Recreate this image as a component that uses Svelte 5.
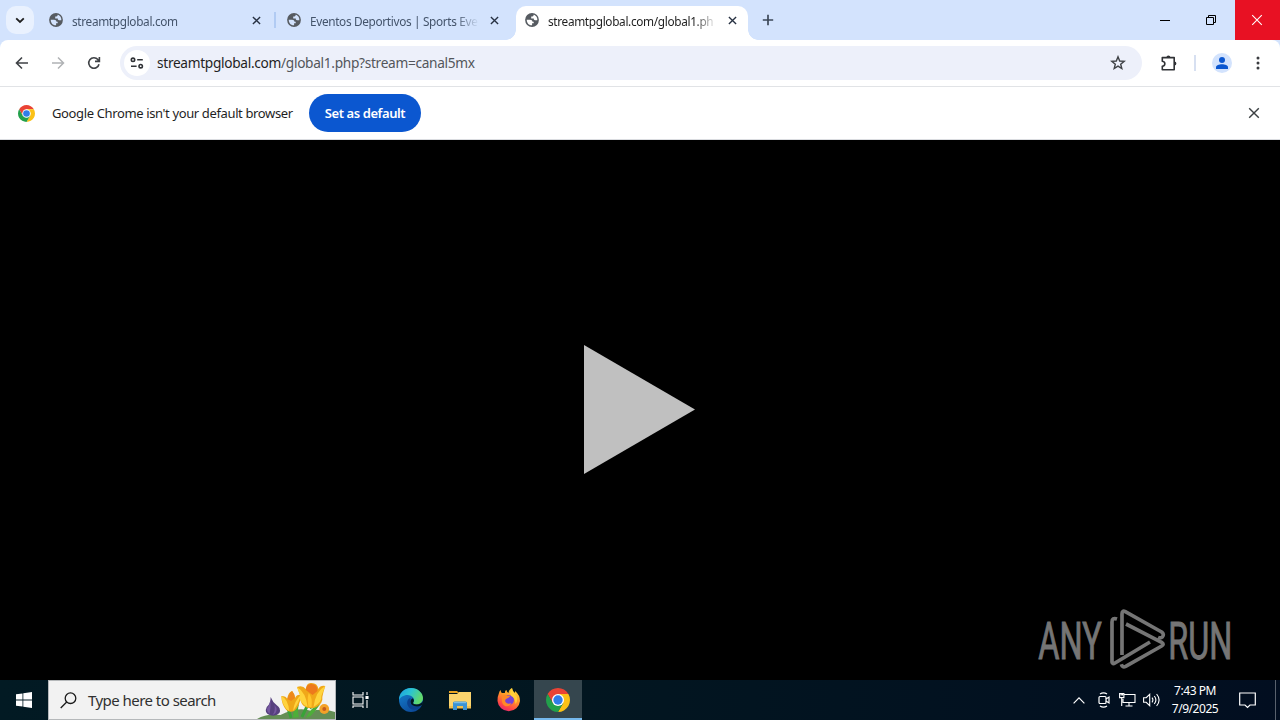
<script lang="ts">
    interface Tab {
        title: string;
        active: boolean;
    }

    let tabs: Tab[] = [
        { title: 'streamtpglobal.com', active: false },
        { title: 'Eventos Deportivos | Sports Eve', active: false },
        { title: 'streamtpglobal.com/global1.ph', active: true }
    ];

    let host = 'streamtpglobal.com';
    let path = '/global1.php?stream=canal5mx';
    let time = '7:43 PM';
    let date = '7/9/2025';
</script>

{#snippet chromeLogo(size: number)}
    <svg width={size} height={size} viewBox="2 2 44 44">
        <path fill="#ea4335" d="M4.95 13A22 22 0 0 1 43.05 13H24L14.47 29.5z" />
        <path fill="#fbc116" d="M43.05 13A22 22 0 0 1 24 46L33.53 29.5L24 13z" />
        <path fill="#22a04b" d="M24 46A22 22 0 0 1 4.95 13L14.47 29.5H33.53z" />
        <circle cx="24" cy="24" r="11" fill="#fff" />
        <circle cx="24" cy="24" r="8.6" fill="#2f7de9" />
    </svg>
{/snippet}

{#snippet cross(size: number, width: number)}
    <svg width={size} height={size} viewBox="0 0 10 10" fill="none" stroke="currentColor" stroke-width={width}>
        <path d="M1 1l8 8M9 1l-8 8" />
    </svg>
{/snippet}

<div class="screen">
    <div class="tab-strip">
        <button class="tab-search" aria-label="Search tabs">
            <svg width="10" height="7" viewBox="0 0 10 7" fill="none" stroke="#1f1f1f" stroke-width="1.8"><path d="M1.2 1.3L5 5l3.8-3.7" /></svg>
        </button>
        <div class="tabs">
            {#each tabs as tab}
                <div class="tab" class:active={tab.active}>
                    <svg class="favicon" width="14" height="14" viewBox="0 0 14 14">
                        <circle cx="7" cy="7" r="6.9" fill="#565b61" />
                        <path fill={tab.active ? '#fff' : '#d3e3fd'} d="M8.6 1.8C9.9 2 11.4 3 12 4.7c.3.8.4 1.8.3 2.6H10c-.8 0-1.2-.5-1.2-1.2V5.4H6.2V3.5h1.2c.8 0 1.2-.7 1.2-1.7z" />
                        <path fill={tab.active ? '#fff' : '#d3e3fd'} d="M1.7 6.7H5c1.5 0 2.5.9 2.5 2.1h1.2v1.4H7.1v2.1c-1.8.1-3.4-.7-4.4-2.1-.7-1-1-2.2-1-3.500z" />
                    </svg>
                    <span class="tab-title">{tab.title}</span>
                    <span class="tab-close">{@render cross(9, 1.5)}</span>
                </div>
            {/each}
        </div>
        <button class="new-tab" aria-label="New tab">
            <svg width="12" height="12" viewBox="0 0 12 12" stroke="#3c4858" stroke-width="1.7"><path d="M6 .8v10.4M.8 6h10.4" /></svg>
        </button>
        <div class="window-buttons">
            <span class="win">
                <svg width="10" height="10" viewBox="0 0 10 10" stroke="#000"><path d="M0 5.5h10" /></svg>
            </span>
            <span class="win">
                <svg width="10" height="10" viewBox="0 0 10 10" fill="none" stroke="#000"><path d="M.5 2.5h7v7h-7zM2.5 2.5v-2h7v7h-2" /></svg>
            </span>
            <span class="win close">{@render cross(12, 0.9)}</span>
        </div>
    </div>

    <div class="toolbar">
        <div class="nav">
            <svg width="14" height="14" viewBox="0 0 14 14" fill="none" stroke="#3f4246" stroke-width="1.6"><path d="M13 7H2M7 1.5L1.5 7 7 12.5" /></svg>
            <svg width="14" height="14" viewBox="0 0 14 14" fill="none" stroke="#b0b2b5" stroke-width="1.5"><path d="M1 7h11M7 1.5L12.5 7 7 12.5" /></svg>
            <svg width="14" height="14" viewBox="0 0 14 14" fill="none" stroke="#3f4246" stroke-width="1.6"><path d="M12 8.2A5.2 5.2 0 1 1 10.9 3.6L12.2 5M12.4 1v4.4H8" /></svg>
        </div>
        <div class="omnibox">
            <span class="site-info">
                <svg width="14" height="12" viewBox="0 0 14 12" fill="none" stroke="#303236" stroke-width="1.6"><circle cx="3" cy="2.8" r="1.7" /><path d="M7.2 2.8h5.6M1 9.2h5.6" /><circle cx="10.7" cy="9.2" r="1.7" /></svg>
            </span>
            <span class="url">{host}<span class="url-path">{path}</span></span>
            <svg class="star" width="16" height="16" viewBox="0 0 16 16" fill="none" stroke="#3f4246" stroke-width="1.4"><path d="M8 1.8l1.7 4.2 4.5.3-3.5 2.9 1.1 4.4L8 11.2l-3.8 2.4 1.1-4.4L1.8 6.3l4.5-.3z" /></svg>
        </div>
        <svg class="puzzle" width="18" height="18" viewBox="0 0 18 18"><path fill="none" stroke="#303236" stroke-width="1.6" stroke-linejoin="round" d="M2.3 3.6h11.9v12.2H2.3v-3.6c3.4-.6 3.4-4.5 0-5z" /><path fill="#303236" d="M6.4 3.4a2 2 0 0 1 4 0zM14.4 7.6a2 2 0 0 1 0 4z" /></svg>
        <span class="divider"></span>
        <span class="avatar">
            <svg width="12" height="12" viewBox="0 0 12 12" fill="#0b57d0"><circle cx="6" cy="3" r="3" /><path d="M0 12v-1.8C0 8.3 3 7.2 6 7.2s6 1.1 6 3V12z" /></svg>
        </span>
        <svg class="menu" width="4" height="14" viewBox="0 0 4 14" fill="#3a3c40"><circle cx="2" cy="2" r="1.5" /><circle cx="2" cy="7" r="1.5" /><circle cx="2" cy="12" r="1.5" /></svg>
    </div>

    <div class="infobar">
        {@render chromeLogo(17)}
        <span class="message">Google Chrome isn't your default browser</span>
        <button class="set-default">Set as default</button>
        <span class="dismiss">{@render cross(12, 1.2)}</span>
    </div>

    <div class="player">
        <svg class="play" width="111" height="129" viewBox="0 0 111 129"><path fill="#c0c0c0" d="M0 0l111 64.5L0 129z" /></svg>
        <svg class="watermark" width="200" height="72" viewBox="0 0 600 216">
            <g class="brand">
                <text x="4" y="160" textLength="190" lengthAdjust="spacingAndGlyphs">ANY</text>
                <text x="394" y="160" textLength="192" lengthAdjust="spacingAndGlyphs">RUN</text>
            </g>
            <g fill="none" stroke="#757575" stroke-width="11" stroke-linejoin="round">
                <path d="M255 147V24q0-12 10-7L374 78q9 7 2 15-5 5-13 1" />
                <path d="M267 54L374 109q9 6 0 11L266 181q-10 5-13-6" />
                <path d="M240 39q-15-5-15 9V168q1 8 9 3L339 108" />
            </g>
        </svg>
    </div>

    <div class="taskbar">
        <span class="start">
            <svg width="16" height="16" viewBox="0 0 16 16" fill="#fff"><path d="M0 2.3L6.5 1.4v6.2H0zM7.3 1.3L16 0v7.6H7.3zM0 8.4h6.5v6.2L0 13.7zM7.3 8.4H16V16l-8.7-1.3z" /></svg>
        </span>
        <div class="search">
            <svg width="17" height="17" viewBox="0 0 17 17" fill="none" stroke="#1b1b1b" stroke-width="1.3"><circle cx="10.5" cy="6.2" r="5.3" /><path d="M6.7 10L.7 16" /></svg>
            <span>Type here to search</span>
            <svg class="flowers" width="78" height="38" viewBox="0 0 80 38" preserveAspectRatio="none">
                <path fill="#648e55" d="M0 38Q10 32 24 34 42 25 56 30 68 27 80 31V38z" />
                <path d="M31 25l4 12M53 22l-7 14M54 27l8-6" stroke="#38a338" stroke-width="3" fill="none" />
                <path d="M37 37q-1-8 6-14-2 8 0 13M50 37q5-11 15-14-5 7-10 12" fill="#4eae39" />
                <path fill="#57417f" d="M14 16q2 5 6 8 5 3 3 8-4 4-10 2-6-2-3-8 4-3 4-10z" />
                <path fill="#7658a0" d="M14 19q0 8-1 14-5-4-1-8zM18 24q1 6-2 10 5-2 4-7z" />
                <path fill="#eea718" d="M25 15q5 0 6 3 1-7 5-8 3 3 3 7 2-4 6-3-1 12-7 16-4 2-8-1-5-6-5-14z" />
                <path fill="#ffd33d" d="M25 15q7 3 8 15-7-4-8-15zM45 14q-2 8-8 16 1-10 8-16z" />
                <path fill="#ee871b" d="M31 18q2-6 5-8 3 4 3 7l-4 3z" />
                <path fill="#f0a819" d="M41 6q6-2 9 2 1-7 6-6 6 0 7 6 2-4 7-3-2 6-3 11 1 6-6 10-7 3-13-1-5-5-3-9z" />
                <path fill="#ffd43c" d="M41 6q9 5 11 20-9-4-8-12zM70 5q-10 5-12 21 9-5 8-11z" />
                <path fill="#ed7a1c" d="M50 9q1-7 6-6 6 0 6 7l-5 4z" />
                <path fill="#ffc52b" d="M53 12q4 4 3 14h-3q-2-7 0-14z" />
                <circle cx="69" cy="28" r="5" fill="#f4a128" />
                <circle cx="69" cy="28" r="2" fill="#c45d20" />
            </svg>
        </div>
        <span class="task-view">
            <svg width="17" height="16" viewBox="0 0 17 16" fill="none" stroke="#fff" stroke-width="1.1"><path d="M1 0v3h10V0M1 5h10v7H1zM1 16v-2h10v2M15 0v3M15 8v8" /><path fill="#fff" d="M14 4.5h2v2h-2z" /></svg>
        </span>
        <div class="apps">
            <span class="app">
                <svg width="24" height="24" viewBox="0 0 24 24">
                    <defs>
                        <linearGradient id="edge-top" x1="0" y1="0" x2="1" y2=".4"><stop offset="0" stop-color="#1b9de2" /><stop offset=".5" stop-color="#2bc3d2" /><stop offset="1" stop-color="#62d96b" /></linearGradient>
                        <linearGradient id="edge-low" x1="0" y1="0" x2=".6" y2="1"><stop offset="0" stop-color="#1685d3" /><stop offset="1" stop-color="#0c4a9a" /></linearGradient>
                    </defs>
                    <circle cx="12" cy="12" r="12" fill="url(#edge-low)" />
                    <path fill="url(#edge-top)" d="M0 12C0 5 5 0 12 0c7 0 12 5 12 10 0 4-3 6.5-6.5 6.5-3 0-4-1.1-3.2-2.2C16.800 11 13 7 8.500 7 4.500 7 1 9.500 0 12z" />
                    <path fill="#0b418e" d="M11.5 10C8 11 7.5 15 9 18c2 4 7 5 11 2l1.5-1.5C17 20 12 18 11.5 15z" />
                    <path fill="#021721" d="M14.4 14.2c.9-1.200.7-2.700-.8-4C10.800 11.500 11 16 14 17.600c3 1.600 6.500.8 8.500-.4 1 0 1.200.3.800 1L24 13c-1 2-3.500 3.500-6.500 3.500-3 0-4-1.200-3.100-2.300z" />
                </svg>
            </span>
            <span class="app">
                <svg width="22" height="19" viewBox="0 0 22 19">
                    <path fill="#e9a421" d="M0 0h8l2 2H0z" />
                    <path fill="#fbd46d" d="M0 3h8l2-2h12v16H0z" />
                    <path fill="#f3c14e" d="M0 15h22v2.500H0z" />
                    <path fill="#3a93d5" d="M4 19v-7q0-1.500 1.500-1.500h11Q18 10.500 18 12v7h-4v-4H8v4z" />
                    <path fill="#79bce8" d="M5 11h12v1.200H5z" />
                </svg>
            </span>
            <span class="app">
                <svg width="24" height="24" viewBox="0 0 24 24">
                    <defs><linearGradient id="fox" x1=".8" y1="0" x2=".3" y2="1"><stop offset="0" stop-color="#ffdf3c" /><stop offset=".45" stop-color="#ff9428" /><stop offset=".8" stop-color="#ff4547" /><stop offset="1" stop-color="#e22872" /></linearGradient></defs>
                    <path fill="url(#fox)" d="M2 5q.4-2 1.600-3 .2 2 1.200 3l3-.1Q8 2 9.500 2q0 2 2 3 0-3 3.500-5 .4 3 3 5V3q5 4 5 10a11.300 11.300 0 0 1-22.500 0Q.5 8 2 5z" />
                    <circle cx="12" cy="12" r="5" fill="#7542d5" />
                    <path fill="#ff8927" d="M5 8q2.500-2 5.500-.2l3-.3q-1.300 2.500-4 3.200-2 1-1 3.300 2 3 6 1-2 4-6 3.200Q4 17 5 8z" />
                    <path fill="#ffd43a" d="M15 0q0 3 3.500 6.500Q22 11 18.500 16 18 9 14 8 12 5 15 0z" opacity=".85" />
                </svg>
            </span>
            <span class="app running">{@render chromeLogo(24)}</span>
        </div>
        <div class="tray">
            <svg width="12" height="7" viewBox="0 0 12 7" fill="none" stroke="#fff" stroke-width="1.2"><path d="M.6 6.3L6 .9l5.4 5.4" /></svg>
            <svg class="meet" width="12" height="16" viewBox="0 0 12 16" fill="none" stroke="#fff" stroke-width="1.2"><path d="M2 2Q5.5-.4 9 2M2 14q3.5 2.4 7 0M8 7l3-2v6l-3-2" /><rect x="1" y="4.5" width="7" height="7" rx="1" /></svg>
            <svg class="network" width="17" height="14" viewBox="0 0 17 14" fill="none" stroke="#fff" stroke-width="1.1"><path d="M5 1.5h11v8H4V6M10 9.5V13M6.5 13h7M.6.6h4.3v4H.6zM2.7 4.6V13M2.2 1v1.5M3.5 1v1.5" /></svg>
            <svg class="volume" width="17" height="14" viewBox="0 0 17 14" fill="none" stroke="#fff" stroke-width="1.1"><path d="M.6 4.7h2.6L6.7 1.3v11.4L3.2 9.3H.6zM9 4.7q1.8 2.3 0 4.6M11.3 3q3.2 4 0 8M13.6 1q5 6 0 12" /></svg>
            <div class="clock"><span>{time}</span><span>{date}</span></div>
            <svg class="action" width="17" height="17" viewBox="0 0 17 17" fill="none" stroke="#fff" stroke-width="1.2"><path d="M.7 1h15.6v12H11l-2.5 2.5L6 13H.7z" /></svg>
            <span class="peek"></span>
        </div>
    </div>
</div>

<style>
    :global(body) {
        margin: 0;
        overflow: hidden;
    }

    .screen {
        width: 1280px;
        height: 720px;
        display: flex;
        flex-direction: column;
        font-family: "Noto Sans", "Open Sans", sans-serif;
        background: #000;
    }

    svg {
        display: block;
        flex: none;
    }

    button {
        border: 0;
        padding: 0;
        font: inherit;
    }

    .tab-strip {
        display: flex;
        height: 40px;
        background: #d3e3fd;
    }

    .tab-search {
        display: flex;
        align-items: center;
        justify-content: center;
        width: 28px;
        height: 28px;
        margin: 6px 4px 0 6px;
        border-radius: 10px;
        background: #e9f1fe;
    }

    .tabs {
        display: flex;
        padding-top: 6px;
    }

    .tab {
        position: relative;
        box-sizing: border-box;
        display: flex;
        align-items: center;
        width: 238px;
        height: 34px;
        padding: 0 15px 6px 11px;
        color: #44546b;
        font-size: 12px;
    }

    .tab:first-child::after {
        content: '';
        position: absolute;
        right: 0;
        top: 6px;
        width: 2px;
        height: 16px;
        background: #b1cbf3;
    }

    .tab.active {
        width: 232px;
        margin-left: 2px;
        padding: 0 11px 6px 9px;
        border-radius: 10px 10px 0 0;
        background: #fff;
        color: #1f1f1f;
    }

    .tab.active::before,
    .tab.active::after {
        content: '';
        position: absolute;
        bottom: 0;
        width: 10px;
        height: 10px;
    }

    .tab.active::before {
        left: -10px;
        background: radial-gradient(circle at 0 0, transparent 9.5px, #fff 10px);
    }

    .tab.active::after {
        right: -10px;
        background: radial-gradient(circle at 100% 0, transparent 9.5px, #fff 10px);
    }

    .tab-title {
        flex: none;
        width: 170px;
        margin-left: 9px;
        padding-top: 1px;
        white-space: nowrap;
        font-size: 11.8px;
        letter-spacing: -0.33px;
        mask-image: linear-gradient(to right, #000 146px, transparent 169px);
    }

    .tab-close {
        margin-left: auto;
        color: #273142;
    }

    .new-tab {
        width: 28px;
        height: 28px;
        margin: 6px 0 0 6px;
        display: flex;
        align-items: center;
        justify-content: center;
        background: none;
    }

    .window-buttons {
        display: flex;
        margin-left: auto;
    }

    .win {
        box-sizing: border-box;
        display: flex;
        width: 46px;
        padding-right: 2px;
        align-items: center;
        justify-content: center;
    }

    .win.close {
        width: 45px;
        background: #e81123;
        color: #fff;
    }

    .toolbar {
        box-sizing: border-box;
        display: flex;
        align-items: center;
        height: 47px;
        padding: 0 20px 0 15px;
        border-bottom: 1px solid #e1e3e6;
        border-radius: 8px 8px 0 0;
        background: #fff;
        box-shadow: 0 -8px 0 -0px #d3e3fd;
        clip-path: inset(0);
    }

    .nav {
        display: flex;
        gap: 22px;
        width: 105px;
    }

    .omnibox {
        display: flex;
        align-items: center;
        box-sizing: border-box;
        width: 1022px;
        height: 34px;
        padding: 0 16px 0 4px;
        border-radius: 17px;
        background: #edf0fa;
    }

    .site-info {
        display: flex;
        align-items: center;
        justify-content: center;
        width: 26px;
        height: 26px;
        border-radius: 50%;
        background: #fff;
    }

    .url {
        margin-left: 7px;
        padding-bottom: 1px;
        color: #1f1f1f;
        font-size: 13.7px;
        letter-spacing: -0.31px;
    }

    .url-path {
        color: #53565b;
    }

    .star {
        margin-left: auto;
    }

    .puzzle {
        margin-left: 18px;
    }

    .divider {
        width: 2px;
        height: 16px;
        margin-left: 16px;
        background: #d7e0f1;
    }

    .avatar {
        display: flex;
        align-items: center;
        justify-content: center;
        width: 20px;
        height: 20px;
        margin-left: 16px;
        border-radius: 50%;
        background: #d3e3fd;
    }

    .menu {
        margin-left: auto;
    }

    .infobar {
        box-sizing: border-box;
        display: flex;
        align-items: center;
        height: 53px;
        padding: 0 20px 0 18px;
        border-bottom: 1px solid #dadce0;
        background: #fff;
        color: #1f1f1f;
        font-size: 13px;
    }

    .message {
        width: 241px;
        margin-left: 17px;
        white-space: nowrap;
        letter-spacing: -0.37px;
    }

    .set-default {
        width: 112px;
        height: 38px;
        margin-left: 16px;
        border-radius: 19px;
        background: #0b57d0;
        color: #fff;
        font-weight: 600;
        letter-spacing: -0.42px;
        white-space: nowrap;
    }

    .dismiss {
        margin-left: auto;
        color: #3c4043;
    }

    .player {
        position: relative;
        display: flex;
        align-items: center;
        justify-content: center;
        height: 540px;
        background: #000;
    }

    .play {
        margin: -1px 1px 0 0;
    }

    .watermark {
        position: absolute;
        right: 43px;
        bottom: 2px;
        overflow: visible;
    }

    .brand {
        fill: #757575;
        stroke: #757575;
        stroke-width: 3px;
        font-family: Roboto, sans-serif;
        font-size: 157px;
    }

    .taskbar {
        display: flex;
        align-items: center;
        height: 40px;
        background: linear-gradient(to right, #021a23, #021620 45%, #020e20);
        color: #fff;
    }

    .start {
        display: flex;
        justify-content: center;
        width: 48px;
    }

    .search {
        position: relative;
        box-sizing: border-box;
        display: flex;
        align-items: center;
        gap: 11px;
        width: 288px;
        height: 40px;
        padding-left: 11px;
        border: 1px solid #b5b8ba;
        background: #f2f2f2;
        color: #303030;
        font-size: 15px;
        letter-spacing: -0.54px;
    }

    .flowers {
        position: absolute;
        right: 0;
        bottom: 0;
    }

    .task-view {
        display: flex;
        justify-content: center;
        width: 48px;
        margin-right: 2px;
    }

    .apps {
        display: flex;
        height: 100%;
    }

    .app {
        display: flex;
        align-items: center;
        justify-content: center;
        width: 49px;
    }

    .app.running {
        box-sizing: border-box;
        width: 48px;
        margin-left: 1px;
        padding-top: 2px;
        border-bottom: 2px solid #76b9ed;
        background: #35464e;
    }

    .tray {
        display: flex;
        align-items: center;
        height: 100%;
        margin-left: auto;
    }

    .meet {
        margin-left: 13px;
    }

    .network {
        margin-left: 9px;
    }

    .volume {
        margin-left: 7px;
    }

    .clock {
        display: flex;
        flex-direction: column;
        align-items: center;
        width: 60px;
        margin-left: 5px;
        font-size: 12px;
        line-height: 18px;
        letter-spacing: -0.45px;
    }

    .action {
        margin-left: 14px;
    }

    .peek {
        width: 4px;
        height: 100%;
        margin-left: 19px;
        border-left: 1px solid #59616d;
    }
</style>
